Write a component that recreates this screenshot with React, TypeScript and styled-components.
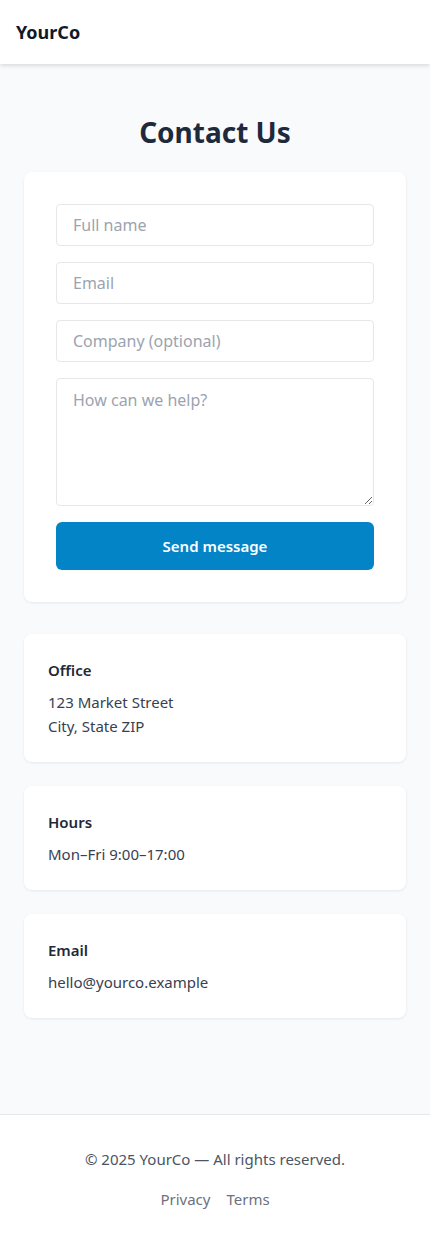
import React from 'react';
import styled, {createGlobalStyle} from "styled-components";

const GlobalStyle = createGlobalStyle`
  * { box-sizing: border-box; }
  body {
    margin: 0;
    font-family: "Noto Sans", "Open Sans", sans-serif;
    background: #f8fafc;
    color: #1f2937;
  }
`

const infoCards = [
    {title: 'Office', lines: ['123 Market Street', 'City, State ZIP']},
    {title: 'Hours', lines: ['Mon–Fri 9:00–17:00']},
    {title: 'Email', lines: ['hello@yourco.example']},
];

export default function App() {
    return (
        <Page>
            <GlobalStyle/>
            <Header>
                <Logo>YourCo</Logo>
            </Header>
            <Main>
                <Title>Contact Us</Title>
                <FormCard onSubmit={e => e.preventDefault()}>
                    <Input placeholder="Full name"/>
                    <Input placeholder="Email"/>
                    <Input placeholder="Company (optional)"/>
                    <TextArea placeholder="How can we help?"/>
                    <SendButton type="submit">Send message</SendButton>
                </FormCard>
                <InfoList>
                    {infoCards.map(card => (
                        <InfoCard key={card.title}>
                            <InfoTitle>{card.title}</InfoTitle>
                            <InfoText>
                                {card.lines.map(line => <div key={line}>{line}</div>)}
                            </InfoText>
                        </InfoCard>
                    ))}
                </InfoList>
            </Main>
            <Footer>
                <Copy>© 2025 YourCo — All rights reserved.</Copy>
                <FooterLinks>
                    <FooterLink href="#">Privacy</FooterLink>
                    <FooterLink href="#">Terms</FooterLink>
                </FooterLinks>
            </Footer>
        </Page>
    );
}

const Page = styled.div`
  min-height: 100vh;
  display: flex;
  flex-direction: column;
`

const Header = styled.header`
  height: 64px;
  background: #fff;
  display: flex;
  align-items: center;
  padding: 0 16px;
  box-shadow: 0 2px 4px rgba(0, 0, 0, 0.12);
  position: relative;
  z-index: 1;
`

const Logo = styled.div`
  font-size: 18px;
  font-weight: 700;
  color: #111827;
`

const Main = styled.main`
  flex: 1;
  padding: 48px 24px 48px;
`

const Title = styled.h1`
  margin: 0 0 20px;
  font-size: 28px;
  line-height: 40px;
  font-weight: 700;
  text-align: center;
  color: #1e293b;
`

const FormCard = styled.form`
  background: #fff;
  border-radius: 8px;
  box-shadow: 0 1px 3px rgba(0, 0, 0, 0.08);
  padding: 32px;
  display: flex;
  flex-direction: column;
  gap: 16px;
`

const Input = styled.input`
  height: 42px;
  border: 1px solid #e5e7eb;
  border-radius: 4px;
  padding: 0 16px;
  font: inherit;
  font-size: 16px;
  color: #1f2937;
  outline: none;
  &::placeholder { color: #9ca3af; }
`

const TextArea = styled.textarea`
  height: 128px;
  border: 1px solid #e5e7eb;
  border-radius: 4px;
  padding: 10px 16px;
  font: inherit;
  font-size: 16px;
  line-height: 22px;
  resize: vertical;
  outline: none;
  &::placeholder { color: #9ca3af; }
`

const SendButton = styled.button`
  height: 48px;
  border: none;
  border-radius: 6px;
  background: #0284c7;
  color: #fff;
  font: inherit;
  font-size: 15px;
  font-weight: 600;
  cursor: pointer;
`

const InfoList = styled.div`
  margin-top: 32px;
  display: flex;
  flex-direction: column;
  gap: 24px;
`

const InfoCard = styled.section`
  background: #fff;
  border-radius: 8px;
  box-shadow: 0 1px 3px rgba(0, 0, 0, 0.08);
  padding: 24px;
`

const InfoTitle = styled.h3`
  margin: 0 0 8px;
  font-size: 15px;
  line-height: 24px;
  font-weight: 600;
  color: #1f2937;
`

const InfoText = styled.div`
  font-size: 15px;
  line-height: 24px;
  color: #374151;
`

const Footer = styled.footer`
  background: #fff;
  border-top: 1px solid #e5e7eb;
  padding: 32px 16px;
  display: flex;
  flex-direction: column;
  align-items: center;
  gap: 16px;
`

const Copy = styled.div`
  font-size: 15px;
  line-height: 24px;
  color: #4b5563;
`

const FooterLinks = styled.nav`
  display: flex;
  gap: 16px;
`

const FooterLink = styled.a`
  font-size: 15px;
  line-height: 24px;
  color: #6b7280;
  text-decoration: none;
`
